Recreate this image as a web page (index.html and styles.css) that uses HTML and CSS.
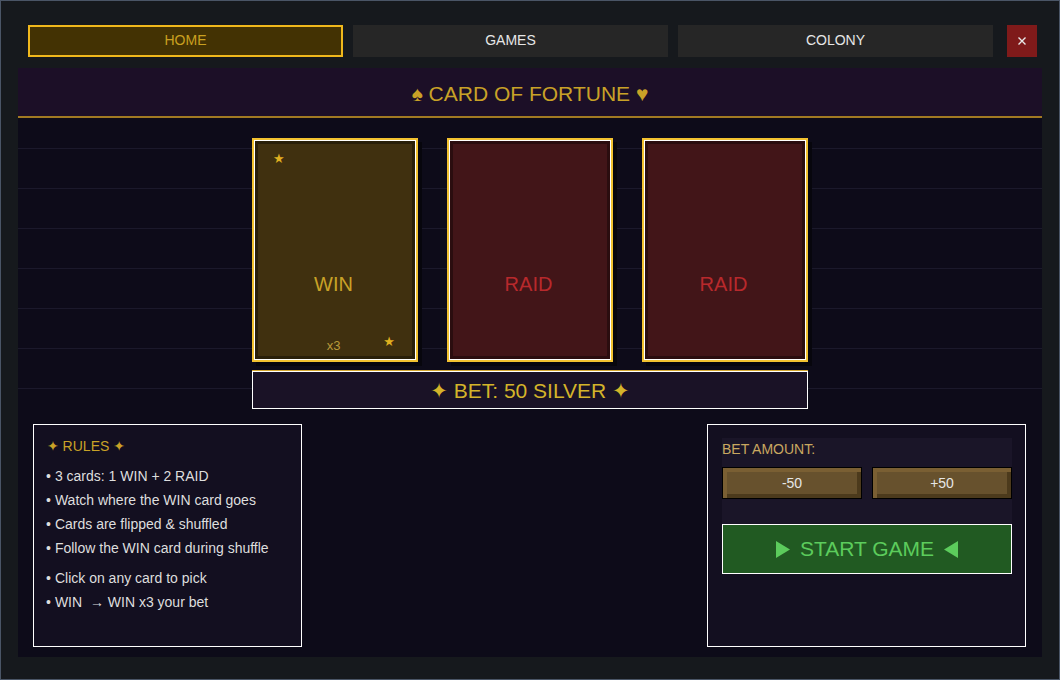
FILE: index.html
```html
<!DOCTYPE html>
<html>
<head>
<title>Card of Fortune</title>
<link rel="stylesheet" href="styles.css">
</head>
<body>

<div class="app">
  <nav class="top-nav">
    <button class="nav-btn active">HOME</button>
    <button class="nav-btn">GAMES</button>
    <button class="nav-btn">COLONY</button>
    <button class="close-btn" title="Close">
      <svg width="10" height="10" viewBox="0 0 10 10"><path d="M1.5 1.5 L8.5 8.5 M8.5 1.5 L1.5 8.5" stroke="#e8e8e8" stroke-width="1.4" fill="none"/></svg>
    </button>
  </nav>

  <div class="game-panel">
    <div class="game-header">♠ CARD OF FORTUNE ♥</div>

    <div class="table">
      <div class="card-row">
        <div class="card card-win">
          <span class="star star-top">★</span>
          <span class="card-label">WIN</span>
          <span class="card-mult">x3</span>
          <span class="star star-bottom">★</span>
        </div>
        <div class="card card-raid">
          <span class="card-label">RAID</span>
        </div>
        <div class="card card-raid">
          <span class="card-label">RAID</span>
        </div>
      </div>
      <div class="bet-bar">✦ BET: 50 SILVER ✦</div>
    </div>

    <div class="bottom-row">
      <div class="rules-box">
        <div class="rules-title">✦ RULES ✦</div>
        <ul class="rules-list">
          <li>3 cards: 1 WIN + 2 RAID</li>
          <li>Watch where the WIN card goes</li>
          <li>Cards are flipped &amp; shuffled</li>
          <li>Follow the WIN card during shuffle</li>
        </ul>
        <ul class="rules-list">
          <li>Click on any card to pick</li>
          <li>WIN &nbsp;→ WIN x3 your bet</li>
        </ul>
      </div>

      <div class="controls-box">
        <div class="bet-controls">
          <div class="bet-label">BET AMOUNT:</div>
          <div class="bet-buttons">
            <button class="bevel-btn">-50</button>
            <button class="bevel-btn">+50</button>
          </div>
        </div>
        <button class="start-btn">
          <svg width="14" height="17" viewBox="0 0 14 17"><polygon points="0,0 14,8.5 0,17" fill="#5ccc5c"/></svg>
          <span>START GAME</span>
          <svg width="14" height="17" viewBox="0 0 14 17"><polygon points="14,0 0,8.5 14,17" fill="#5ccc5c"/></svg>
        </button>
      </div>
    </div>
  </div>
</div>

</body>
</html>
```

FILE: styles.css
```css
* {
  box-sizing: border-box;
}
html, body {
  margin: 0;
  padding: 0;
}
body {
  font-family: "Liberation Sans", Arial, "DejaVu Sans", sans-serif;
  background-color: #16191d;
  color: #e0e0e0;
}
button {
  font-family: inherit;
  cursor: pointer;
}
.app {
  width: 1060px;
  height: 680px;
  border: 1px solid #4a5566;
  background-color: #16191d;
  display: flex;
  flex-direction: column;
}

/* top navigation */
.top-nav {
  display: flex;
  gap: 10px;
  margin: 24px 22px 0 27px;
  height: 32px;
}
.nav-btn {
  width: 315px;
  flex: none;
  border: none;
  padding: 0 0 2px 0;
  background-color: #262626;
  color: #e6e6e6;
  font-size: 14px;
}
.nav-btn.active {
  background-color: #433203;
  border: 2px solid #f0b81c;
  color: #c9a020;
}
.close-btn {
  width: 30px;
  margin-left: 4px;
  border: none;
  background-color: #7f1a1a;
  display: flex;
  align-items: center;
  justify-content: center;
  padding: 0;
}

/* main game panel */
.game-panel {
  margin: 11px 17px 22px 17px;
  flex: 1;
  background-color: #0d0b19;
  display: flex;
  flex-direction: column;
}
.game-header {
  height: 50px;
  padding-top: 3px;
  background-color: #1c0f27;
  border-bottom: 2px solid #a17a22;
  color: #c9a227;
  font-size: 21px;
  display: flex;
  align-items: center;
  justify-content: center;
}
.table {
  padding-top: 20px;
  display: flex;
  flex-direction: column;
  align-items: center;
  background-image: linear-gradient(#1b192b 1px, transparent 1px);
  background-size: 100% 40px;
  background-position: 0 30px;
}
.card-row {
  display: flex;
  gap: 29px;
}
.card {
  position: relative;
  width: 166px;
  height: 224px;
  border: 2px solid #f2c230;
  box-shadow: inset 0 0 0 1px #ffffff, inset 0 0 0 4px rgba(0, 0, 0, 0.35), 4px 4px 0 #07060d;
  display: flex;
  align-items: center;
  justify-content: center;
  padding-top: 68px;
  padding-right: 3px;
  font-size: 20px;
}
.card-win {
  background-color: #40300f;
  color: #c9a227;
}
.card-raid {
  background-color: #421518;
  color: #b8292c;
}
.star {
  position: absolute;
  font-family: "DejaVu Sans", sans-serif;
  font-size: 13px;
  color: #e0b020;
  line-height: 13px;
}
.star-top {
  left: 19px;
  top: 12px;
}
.star-bottom {
  right: 21px;
  bottom: 12px;
}
.card-mult {
  position: absolute;
  left: 0;
  right: 3px;
  bottom: 7px;
  text-align: center;
  font-size: 13px;
  color: #b89a3a;
}
.bet-bar {
  margin-top: 9px;
  width: 556px;
  height: 38px;
  padding-top: 2px;
  border: 1px solid #ffffff;
  box-shadow: 0 -1px 0 #d4a830;
  background-color: #1a1226;
  color: #d4b42a;
  font-size: 21px;
  display: flex;
  align-items: center;
  justify-content: center;
}

/* rules + controls */
.bottom-row {
  display: flex;
  justify-content: space-between;
  margin: 15px 16px 0 15px;
}
.rules-box {
  width: 269px;
  height: 223px;
  border: 1px solid #ffffff;
  background-color: #130f20;
  padding: 12px 12px;
}
.rules-title {
  color: #c9a227;
  font-size: 14px;
  line-height: 18px;
  margin-bottom: 9px;
  padding-left: 1px;
}
.rules-list {
  list-style: none;
  margin: 0 0 6px 0;
  padding: 0;
}
.rules-list li {
  font-size: 14px;
  line-height: 24px;
  color: #dedede;
}
.rules-list li::before {
  content: "•";
  margin-right: 4px;
}
.controls-box {
  width: 319px;
  height: 223px;
  border: 1px solid #ffffff;
  background-color: #130f20;
  padding: 13px 13px 0 14px;
}
.bet-controls {
  background-color: #1a1528;
  height: 86px;
  padding-top: 3px;
}
.bet-label {
  color: #c9a860;
  font-size: 14px;
  line-height: 16px;
  margin-bottom: 10px;
}
.bet-buttons {
  display: flex;
  gap: 10px;
}
.bevel-btn {
  flex: 1 1 0;
  height: 32px;
  background-color: #67512d;
  border: 1px solid #000000;
  box-shadow: inset 4px 4px 0 #7a5f33, inset -4px -4px 0 #4c3a1c;
  color: #e6e6e6;
  font-size: 14px;
}
.start-btn {
  width: 100%;
  height: 50px;
  background-color: #215a22;
  border: 1px solid #ffffff;
  color: #5ccc5c;
  font-size: 21px;
  display: flex;
  align-items: center;
  justify-content: center;
  gap: 10px;
}
```
